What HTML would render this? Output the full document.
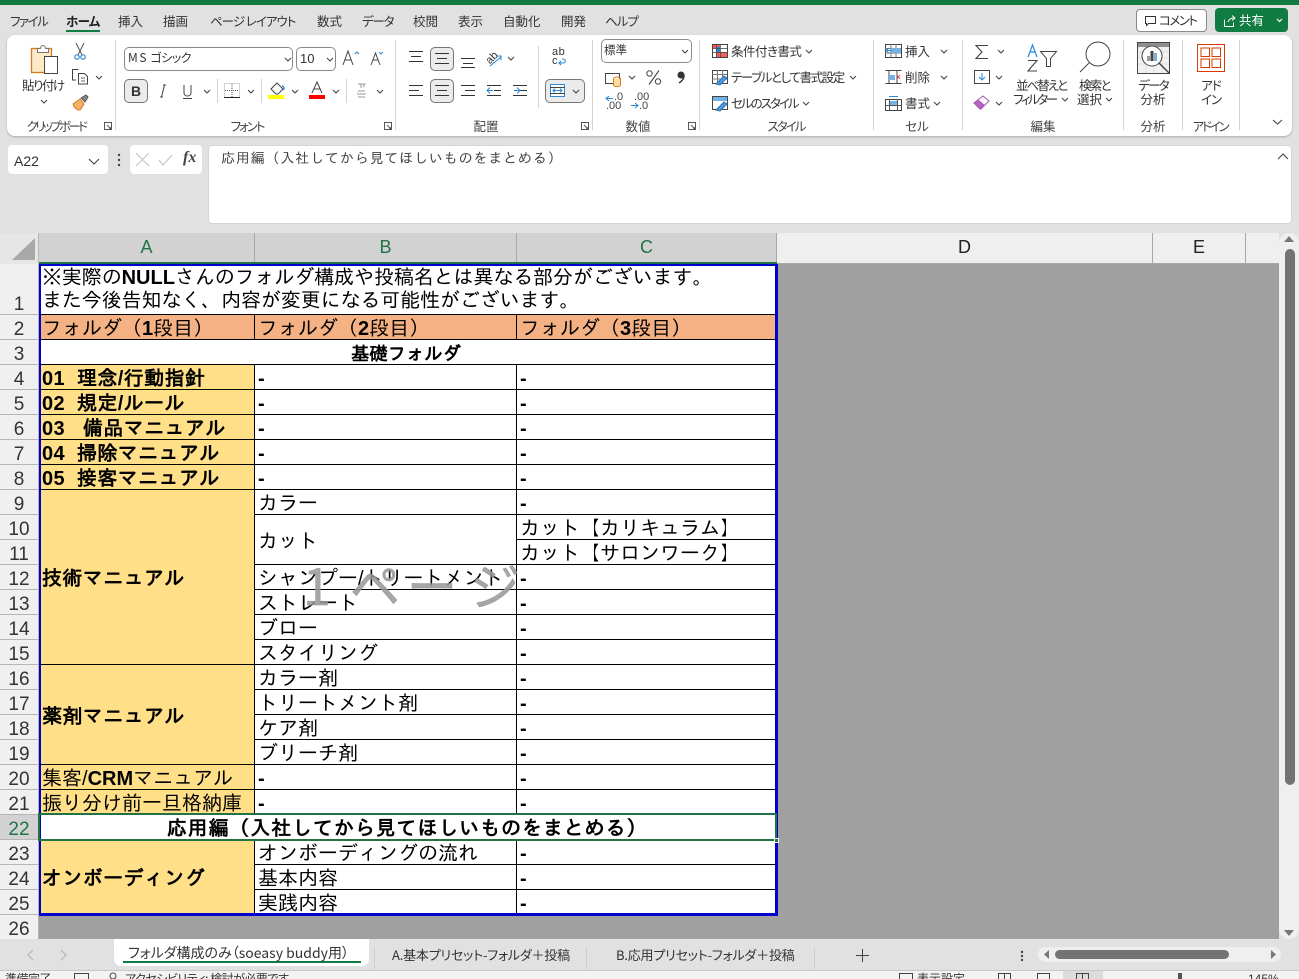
<!DOCTYPE html>
<html lang="ja"><head><meta charset="utf-8"><title>Excel</title>
<style>
*{box-sizing:border-box}
html,body{margin:0;padding:0;width:1299px;height:979px;overflow:hidden;background:#e1e1e1}
body{position:relative;font-family:"Liberation Sans","Noto Sans CJK JP",sans-serif;color:#222}
.a{position:absolute}
.t{position:absolute;white-space:nowrap;font-size:12.5px;line-height:16px;font-family:"Noto Sans CJK JP",sans-serif;font-feature-settings:"palt";color:#333}
.c{transform:translateX(-50%)}
.lb{color:#444;top:118px}
.m{top:13px;font-size:12.5px;color:#333}
table{position:absolute;left:39px;top:264px;border-collapse:separate;border-spacing:0;table-layout:fixed;width:738px;font-family:"Liberation Sans","IPAGothic",sans-serif;font-size:20px;color:#000}
td{padding:4px 0 0 3px;height:25px;border-right:1px solid #000;border-bottom:1px solid #000;line-height:20px;white-space:nowrap;overflow:hidden;background:#fff;vertical-align:middle}
td.y{background:#ffdf88;font-weight:bold;letter-spacing:.4px}
td.o{background:#f4b183}
td.h{text-align:center;font-weight:bold}
td b{font-weight:bold;font-family:"Liberation Sans",sans-serif;letter-spacing:0}
.rh{position:absolute;left:0;width:38px;text-align:center;font-size:19px;line-height:18px;color:#333;background:#f0f0f0;border-bottom:1px solid #b5b5b5;display:flex;align-items:flex-end;justify-content:center}
.ch{position:absolute;top:233px;height:30px;text-align:center;font-size:18px;line-height:29px;border-right:1px solid #a8a8a8}
</style></head><body>
<div class="a" style="left:0;top:0;width:1299px;height:5px;background:#107c41"></div>

<span class="t m" style="left:10px;letter-spacing:-1.5px">ファイル</span>
<span class="t m" style="left:66px;font-weight:700;color:#222;letter-spacing:-.7px">ホーム</span>
<div class="a" style="left:66px;top:30px;width:34px;height:2px;background:#107c41"></div>
<span class="t m" style="left:118px">挿入</span>
<span class="t m" style="left:163px">描画</span>
<span class="t m" style="left:210px;letter-spacing:-1px">ページ レイアウト</span>
<span class="t m" style="left:317px">数式</span>
<span class="t m" style="left:362px;letter-spacing:-1.2px">データ</span>
<span class="t m" style="left:413px">校閲</span>
<span class="t m" style="left:458px">表示</span>
<span class="t m" style="left:503px">自動化</span>
<span class="t m" style="left:561px">開発</span>
<span class="t m" style="left:605px;letter-spacing:-1px">ヘルプ</span>

<div class="a" style="left:1136px;top:9px;width:71px;height:23px;background:#fff;border:1px solid #8a8a8a;border-radius:4px"></div>
<span class="t" style="left:1159px;top:12px;letter-spacing:-1.5px">コメント</span>
<div class="a" style="left:1215px;top:8px;width:73px;height:24px;background:#107c41;border-radius:4px"></div>
<span class="t" style="left:1239px;top:12px;color:#fff">共有</span>

<div class="a" style="left:7px;top:35px;width:1285px;height:101px;background:#fff;border-radius:8px;box-shadow:0 1px 2px rgba(0,0,0,.25)"></div>

<div class="a" style="left:8px;top:145px;width:100px;height:29px;background:#fff;border-radius:4px"></div>
<div class="a" style="left:130px;top:145px;width:72px;height:29px;background:#fff;border-radius:4px"></div>
<div class="a" style="left:208px;top:145px;width:1084px;height:79px;background:#fff;border:1px solid #d5d5d5;border-radius:4px"></div>

<div class="a" style="left:124px;top:47px;width:169px;height:24px;border:1px solid #8a8a8a;border-radius:5px;background:#fff"></div>
<span class="t" style="left:128px;top:50px;font-size:12px;letter-spacing:-.5px">M S&nbsp; ゴシック</span>
<div class="a" style="left:296px;top:47px;width:40px;height:24px;border:1px solid #8a8a8a;border-radius:5px;background:#fff"></div>
<span class="t" style="left:300px;top:51px;font-family:'Liberation Sans';font-size:13px">10</span>
<div class="a" style="left:124px;top:79px;width:24px;height:24px;border:1px solid #777;border-radius:5px;background:#ebebeb"></div>
<span class="t" style="left:131px;top:83px;font-family:'Liberation Sans';font-weight:700;font-size:14px;color:#333">B</span>
<div class="a" style="left:430px;top:47px;width:24px;height:24px;border:1px solid #777;border-radius:5px;background:#ebebeb"></div>
<div class="a" style="left:430px;top:79px;width:24px;height:24px;border:1px solid #777;border-radius:5px;background:#ebebeb"></div>
<div class="a" style="left:545px;top:79px;width:40px;height:24px;border:1px solid #777;border-radius:5px;background:#ebebeb"></div>
<div class="a" style="left:601px;top:39px;width:91px;height:24px;border:1px solid #8a8a8a;border-radius:5px;background:#fff"></div>
<span class="t" style="left:604px;top:42px;font-size:11.5px">標準</span>

<svg class="a" style="left:0;top:0" width="1299" height="180" viewBox="0 0 1299 180" fill="none">
<g stroke="#d3d3d3" stroke-width="1"><path d="M115.500 40V130M395.500 40V130M592.500 40V130M699.500 40V130M873.500 40V130M962.500 40V130M1123.500 40V130M1182.500 40V130M1239.500 40V130M217.500 79V103M261.500 79V103M346.500 79V103M538.500 46V108"/></g>
<!-- comment / share -->
<path d="M1145.500 16.500h10v7h-7l-2 2v-2h-1z" stroke="#333"/>
<path d="M1224.500 19.500v7h9v-4M1228 22c1-3 3-4 6-4M1232 15.500l3 2.500-3 2.500" stroke="#fff"/>
<path d="M1277 19l2.500 2.500 2.500-2.500" stroke="#fff" stroke-width="1.200"/>
<!-- paste -->
<rect x="31.500" y="48.500" width="20" height="24" fill="#fbe9c8" stroke="#d9791c" stroke-width="1.300"/>
<path d="M37.500 52.500v-4h3c0-4 5-4 5 0h3v4z" fill="#fff" stroke="#777"/>
<rect x="44.500" y="56.500" width="13" height="17" fill="#fff" stroke="#444"/>
<!-- scissors -->
<path d="M76 43l6 12M84 43l-6 12" stroke="#555"/><circle cx="77" cy="57" r="2.200" stroke="#2b88d8" stroke-width="1.200"/><circle cx="83" cy="57" r="2.200" stroke="#2b88d8" stroke-width="1.200"/>
<!-- copy -->
<path d="M76 80h-3.500V69.500h6M78.500 73.500h6l3 3v7.500h-9z" stroke="#444"/><path d="M81 78h4M81 81h4" stroke="#666"/>
<!-- brush -->
<path d="M73 104l7-5 4 5-4 6c-3 0-6-2-7-6z" fill="#f4b16a" stroke="#d9791c"/><path d="M81 98l5-3 2 2-3 5z" fill="#888" stroke="#555"/>
<!-- launchers -->
<g stroke="#555"><path d="M104.500 122.500h7v7h-7zM107 125l4 4M111 127v2h-2"/><path d="M384.500 122.500h7v7h-7zM387 125l4 4M391 127v2h-2"/><path d="M581.500 122.500h7v7h-7zM584 125l4 4M588 127v2h-2"/><path d="M688.500 122.500h7v7h-7zM691 125l4 4M695 127v2h-2"/></g>
<!-- chevrons -->
<g stroke="#444" stroke-width="1.100"><path d="M41 100l3 3 3-3M96 76l3 3 3-3M285 58l3 3 3-3M327 58l3 3 3-3M204 90l3 3 3-3M248 90l3 3 3-3M292 90l3 3 3-3M333 90l3 3 3-3M377 90l3 3 3-3M508 57l3 3 3-3M573 90l3 3 3-3M682 50l3 3 3-3M629 76l3 3 3-3M806 50l3 3 3-3M850 76l3 3 3-3M803 102l3 3 3-3M941 50l3 3 3-3M941 76l3 3 3-3M934 102l3 3 3-3M998 50l3 3 3-3M996 76l3 3 3-3M996 102l3 3 3-3M1062 98l3 3 3-3M1106 98l3 3 3-3M1273 120l4.500 4 4.500-4M89 159l5 5 5-5M1278 159l5-5 5 5"/></g>
<!-- font size A -->
<path d="M343 65l5-14 5 14M345 60h6" stroke="#444"/><path d="M355 54l2-2 2 2" stroke="#2b88d8"/>
<path d="M371 65l4.500-12 4.500 12M373 60h5" stroke="#444"/><path d="M379 52l2 2 2-2" stroke="#2b88d8"/>
<!-- I U -->
<path d="M163 85h3M160 97h3M164.500 85l-3 12" stroke="#444"/>
<path d="M184 85v8c0 4 7 4 7 0v-8M183 98.500h9" stroke="#444"/>
<!-- borders -->
<path d="M224.500 83.500h15v14h-15z" stroke="#aaa" stroke-dasharray="1 1"/><path d="M224 97.500h16" stroke="#222"/><path d="M232 84v13M225 90.500h14" stroke="#555" stroke-dasharray="1 1"/>
<!-- fill -->
<path d="M271 89l6-6 6 6-5 5h-2z" stroke="#444"/><path d="M282 86c2 0 2 2 2 4" stroke="#2b88d8" stroke-width="1.300"/><rect x="268" y="95" width="16" height="4" fill="#ffff00"/>
<!-- font color -->
<path d="M312 93l5-11 5 11M314 89h6" stroke="#444"/><rect x="309" y="95" width="16" height="4" fill="#ff0000"/>
<!-- ruby -->
<path d="M358 84h7l-2 3M361 84v4M358 91h7M357 94h9M358 97h7" stroke="#999"/>
<!-- align -->
<g stroke="#333"><path d="M409 51.500h14M411 56.500h10M409 61.500h14"/><path d="M435 53.500h14M437 58.500h10M435 63.500h14"/><path d="M461 58.500h14M463 63.500h10M461 67.500h14"/><path d="M409 85.500h14M409 90.500h10M409 95.500h14"/><path d="M435 85.500h14M437 90.500h10M435 95.500h14"/><path d="M461 85.500h14M465 90.500h10M461 95.500h14"/><path d="M487 85.500h14M494 90.500h7M487 95.500h14"/><path d="M513 85.500h14M520 90.500h7M513 95.500h14"/></g>
<path d="M487 90.500h6M490 87.500l-3 3 3 3" stroke="#2b88d8"/>
<path d="M514 90.500h5M517 87.500l3 3-3 3" stroke="#2b88d8"/>
<path d="M490 66l11-9M497 56h4v4" stroke="#2b88d8" stroke-width="1.100"/>
<!-- wrap -->
<path d="M559 63h4c3 0 3-4 0-4h-1M561 61l-2 2 2 2" stroke="#2b88d8" stroke-width="1.100"/>
<!-- merge -->
<rect x="550.500" y="84.500" width="14" height="12" stroke="#2b88d8" fill="#fff"/><path d="M550 87.500h15M550 93.500h15" stroke="#444"/><path d="M553 90.500h9M555 88.500l-2 2 2 2M560 88.500l2 2-2 2" stroke="#2b88d8"/>
<!-- number -->
<rect x="605.500" y="73.500" width="14" height="10" stroke="#444"/><ellipse cx="617" cy="79" rx="3.500" ry="2" stroke="#e07b10"/><path d="M613.500 79v6c0 2 7 2 7 0v-6" fill="#fbdca8" stroke="#e07b10"/>
<circle cx="649.500" cy="73.500" r="2.700" stroke="#444"/><circle cx="658" cy="81.500" r="2.700" stroke="#444"/><path d="M659 70.500l-10 14" stroke="#444" stroke-width="1.100"/>
<circle cx="681" cy="75" r="3.500" fill="#333"/><path d="M684 75c0 4-2 6-5 8" stroke="#333" stroke-width="1.500"/>
<path d="M606 98.500h7M609 96l-3 2.500 3 2.500" stroke="#2b88d8"/><path d="M631 105.500h7M635 103l3 2.500-3 2.500" stroke="#2b88d8"/>
<!-- styles -->
<rect x="712.500" y="44.500" width="15" height="13" stroke="#444"/><rect x="713" y="45" width="7" height="3.500" fill="#ee5f5f"/><rect x="716" y="52" width="11" height="5" fill="#ee5f5f"/><path d="M716 47v5h4v-5" fill="#2b88d8"/><path d="M712 48.500h15M712 52.500h15M716.500 44v13M720.500 44v13" stroke="#444" stroke-width=".7"/>
<rect x="712.500" y="70.500" width="15" height="13" stroke="#444"/><path d="M712 74.500h15M717.500 70v13M722.500 70v13M712 79h15" stroke="#777"/><path d="M716 84l8-8 3 2-7 7z" fill="#4a9be0" stroke="#2b6ea8"/>
<rect x="712.500" y="96.500" width="15" height="13" stroke="#444"/><rect x="713" y="97" width="14" height="4" fill="#74b2e6"/><path d="M716 110l8-8 3 2-7 7z" fill="#4a9be0" stroke="#2b6ea8"/>
<!-- cells -->
<rect x="885.500" y="44.500" width="16" height="13" stroke="#444"/><path d="M885 48.500h16M885 53h16M891 44v13M896 44v13" stroke="#777"/><rect x="891" y="48" width="10" height="5" fill="#74b2e6"/><path d="M887 50.500h5M889 48l-3 2.500 3 2.500" stroke="#2b88d8"/>
<path d="M885.500 70.500h16M885.500 83.500h16M889 70v14M897 70v14" stroke="#444"/><rect x="889" y="75" width="6" height="5" fill="#74b2e6"/><path d="M897 75l3 4M900 75l-3 4" stroke="#e04b4b"/>
<rect x="885.500" y="99.500" width="16" height="11" stroke="#444"/><rect x="889" y="101" width="8" height="5" fill="#74b2e6"/><path d="M889 96.500h9" stroke="#2b88d8"/><path d="M885 105.500h16M889.500 99v11M897.500 99v11" stroke="#555"/>
<!-- sum fill eraser -->
<path d="M988 45.500h-12l6 6.500-6 6.500h12" stroke="#444" stroke-width="1.100"/>
<rect x="974.500" y="70.500" width="15" height="13" stroke="#444"/><path d="M982 73v7M979 77l3 3 3-3" stroke="#2b88d8"/>
<path d="M974 103l9-7 6 5-8 8z" fill="#fff" stroke="#a555b5"/><path d="M974 103l4-3 6 5-4 4z" fill="#b564c4" stroke="#a555b5"/>
<!-- sort -->
<path d="M1028 57l4.500-12 4.500 12M1030 52h5" stroke="#2b88d8" stroke-width="1.200"/><path d="M1028 60.500h9l-9 10.500h9" stroke="#444" stroke-width="1.100"/>
<path d="M1040.500 51.500h16l-6 7v8l-4 0v-8z" stroke="#444"/>
<!-- find -->
<circle cx="1098" cy="54" r="12" stroke="#444"/><path d="M1089 63l-9 9" stroke="#444"/>
<!-- data analysis -->
<rect x="1137.500" y="42.500" width="32" height="31" fill="#f2f2f2" stroke="#444"/><rect x="1138" y="43" width="31" height="4" fill="#8f8f8f"/><path d="M1138 52h31M1138 58h31M1138 64h31M1146 47v26M1154 47v26M1162 47v26" stroke="#ddd"/>
<circle cx="1152" cy="56" r="10" fill="#fff" stroke="#444"/><path d="M1159 63l10 10" stroke="#444" stroke-width="1.500"/><rect x="1147" y="56" width="3" height="5" fill="#999"/><rect x="1150.500" y="51" width="3" height="10" fill="#444"/><rect x="1154" y="53" width="3" height="8" fill="#74b2e6"/>
<!-- addin -->
<rect x="1197.500" y="44.500" width="27" height="27" stroke="#d83b01" stroke-width="1"/><rect x="1201" y="48" width="8.500" height="8.500" stroke="#d83b01"/><rect x="1212" y="48" width="8.500" height="8.500" stroke="#d83b01"/><rect x="1201" y="59" width="8.500" height="8.500" stroke="#d83b01"/><rect x="1212" y="59" width="8.500" height="8.500" stroke="#d83b01"/>
<!-- fx marks -->
<path d="M136 153l13 13M149 153l-13 13M159 160l4 5 9-10" stroke="#c6c6c6" stroke-width="1.200"/>
<circle cx="119" cy="155" r="1.200" fill="#444"/><circle cx="119" cy="160" r="1.200" fill="#444"/><circle cx="119" cy="165" r="1.200" fill="#444"/>
</svg>

<span class="t" style="left:486px;top:50px;font-family:'Liberation Sans';font-size:11px;transform:rotate(-45deg)">ab</span>
<span class="t" style="left:552px;top:47px;font-family:'Liberation Sans';font-size:11px;line-height:10px;letter-spacing:.5px">ab</span>
<span class="t" style="left:552px;top:56px;font-family:'Liberation Sans';font-size:11px;line-height:10px">c</span>
<span class="t" style="left:614px;top:92px;font-family:'Liberation Sans';font-size:11px;line-height:10px;color:#444">.0</span>
<span class="t" style="left:606px;top:101px;font-family:'Liberation Sans';font-size:11px;line-height:10px;color:#444">.00</span>
<span class="t" style="left:634px;top:92px;font-family:'Liberation Sans';font-size:11px;line-height:10px;color:#444">.00</span>
<span class="t" style="left:639px;top:101px;font-family:'Liberation Sans';font-size:11px;line-height:10px;color:#444">.0</span>

<span class="t" style="left:22px;top:77px;letter-spacing:-1.5px">貼り付け</span>
<span class="t" style="left:731px;top:43px;letter-spacing:-.5px">条件付き書式</span>
<span class="t" style="left:731px;top:69px;letter-spacing:-1.4px">テーブルとして書式設定</span>
<span class="t" style="left:731px;top:95px;letter-spacing:-2px">セルのスタイル</span>
<span class="t" style="left:905px;top:43px">挿入</span>
<span class="t" style="left:905px;top:69px">削除</span>
<span class="t" style="left:905px;top:95px">書式</span>
<span class="t" style="left:1016px;top:77px;letter-spacing:-2px">並べ替えと</span>
<span class="t" style="left:1013px;top:91px;letter-spacing:-2.4px">フィルター</span>
<span class="t" style="left:1079px;top:77px;letter-spacing:-1.7px">検索と</span>
<span class="t" style="left:1077px;top:91px">選択</span>
<span class="t c" style="left:1153px;top:77px;letter-spacing:-1.8px">データ</span>
<span class="t c" style="left:1153px;top:91px">分析</span>
<span class="t c" style="left:1211px;top:77px;letter-spacing:-1px">アド</span>
<span class="t c" style="left:1211px;top:91px;letter-spacing:-1px">イン</span>
<span class="t c lb" style="left:56px;letter-spacing:-2.6px">クリップボード</span>
<span class="t c lb" style="left:247px;letter-spacing:-2px">フォント</span>
<span class="t c lb" style="left:486px">配置</span>
<span class="t c lb" style="left:638px">数値</span>
<span class="t c lb" style="left:786px;letter-spacing:-2px">スタイル</span>
<span class="t c lb" style="left:917px">セル</span>
<span class="t c lb" style="left:1043px">編集</span>
<span class="t c lb" style="left:1153px">分析</span>
<span class="t c lb" style="left:1210px;letter-spacing:-2.2px">アドイン</span>

<span class="t" style="left:14px;top:153px;font-family:'Liberation Sans';font-size:14px;color:#333">A22</span>
<span class="t" style="left:183px;top:150px;font-family:'Liberation Serif';font-style:italic;font-weight:700;font-size:16px;color:#444">fx</span>
<span class="t" style="left:221px;top:150px;font-family:'IPAGothic',sans-serif;font-feature-settings:normal;font-size:14px;color:#444;letter-spacing:.85px">応用編（入社してから見てほしいものをまとめる）</span>

<div class="a" style="left:0;top:233px;width:1279px;height:31px;background:#efefef;border-bottom:1px solid #a8a8a8"></div>
<div class="a" style="left:0;top:233px;width:39px;height:31px;background:#e6e6e6;border-right:1px solid #b5b5b5"></div>
<svg class="a" style="left:0;top:233px" width="39" height="31"><path d="M35 5v22H12z" fill="#a8a8a8"/></svg>
<div class="ch" style="left:39px;width:216px;background:#d2d2d2;color:#217346">A</div>
<div class="ch" style="left:255px;width:262px;background:#d2d2d2;color:#217346">B</div>
<div class="ch" style="left:517px;width:260px;background:#d2d2d2;color:#217346">C</div>
<div class="ch" style="left:777px;width:376px;color:#222">D</div>
<div class="ch" style="left:1153px;width:93px;color:#222">E</div>

<div class="a" style="left:0;top:264px;width:39px;height:675px;background:#f0f0f0;border-right:1px solid #b5b5b5"></div>
<div class="a" style="left:39px;top:264px;width:1240px;height:675px;background:#a0a0a0"></div>

<div class="rh" style="top:264px;height:51px">1</div>
<div class="rh" style="top:315px;height:25px">2</div>
<div class="rh" style="top:340px;height:25px">3</div>
<div class="rh" style="top:365px;height:25px">4</div>
<div class="rh" style="top:390px;height:25px">5</div>
<div class="rh" style="top:415px;height:25px">6</div>
<div class="rh" style="top:440px;height:25px">7</div>
<div class="rh" style="top:465px;height:25px">8</div>
<div class="rh" style="top:490px;height:25px">9</div>
<div class="rh" style="top:515px;height:25px">10</div>
<div class="rh" style="top:540px;height:25px">11</div>
<div class="rh" style="top:565px;height:25px">12</div>
<div class="rh" style="top:590px;height:25px">13</div>
<div class="rh" style="top:615px;height:25px">14</div>
<div class="rh" style="top:640px;height:25px">15</div>
<div class="rh" style="top:665px;height:25px">16</div>
<div class="rh" style="top:690px;height:25px">17</div>
<div class="rh" style="top:715px;height:25px">18</div>
<div class="rh" style="top:740px;height:25px">19</div>
<div class="rh" style="top:765px;height:25px">20</div>
<div class="rh" style="top:790px;height:25px">21</div>
<div class="rh" style="top:815px;height:25px;background:#d2d2d2;color:#217346">22</div>
<div class="rh" style="top:840px;height:25px">23</div>
<div class="rh" style="top:865px;height:25px">24</div>
<div class="rh" style="top:890px;height:25px">25</div>
<div class="rh" style="top:915px;height:24px;border-bottom:0">26</div>

<table>
<colgroup><col style="width:216px"><col style="width:262px"><col style="width:260px"></colgroup>
<tr style="height:51px"><td colspan="3" style="height:51px;line-height:23px;padding-top:3px;vertical-align:top;letter-spacing:-.1px">※実際の<b>NULL</b>さんのフォルダ構成や投稿名とは異なる部分がございます。<br>また今後告知なく、内容が変更になる可能性がございます。</td></tr>
<tr><td class="o">フォルダ（<b>1</b>段目）</td><td class="o">フォルダ（<b>2</b>段目）</td><td class="o">フォルダ（<b>3</b>段目）</td></tr>
<tr><td colspan="3" class="h" style="font-size:18.3px;padding-right:6px">基礎フォルダ</td></tr>
<tr><td class="y">01&nbsp; 理念/行動指針</td><td><b>-</b></td><td><b>-</b></td></tr>
<tr><td class="y">02&nbsp; 規定/ルール</td><td><b>-</b></td><td><b>-</b></td></tr>
<tr><td class="y">03&nbsp;&nbsp; 備品マニュアル</td><td><b>-</b></td><td><b>-</b></td></tr>
<tr><td class="y">04&nbsp; 掃除マニュアル</td><td><b>-</b></td><td><b>-</b></td></tr>
<tr><td class="y">05&nbsp; 接客マニュアル</td><td><b>-</b></td><td><b>-</b></td></tr>
<tr><td class="y" rowspan="7">技術マニュアル</td><td>カラー</td><td><b>-</b></td></tr>
<tr><td rowspan="2">カット</td><td>カット【カリキュラム】</td></tr>
<tr><td>カット【サロンワーク】</td></tr>
<tr><td>シャンプー/トリートメント</td><td><b>-</b></td></tr>
<tr><td>ストレート</td><td><b>-</b></td></tr>
<tr><td>ブロー</td><td><b>-</b></td></tr>
<tr><td>スタイリング</td><td><b>-</b></td></tr>
<tr><td class="y" rowspan="4">薬剤マニュアル</td><td>カラー剤</td><td><b>-</b></td></tr>
<tr><td>トリートメント剤</td><td><b>-</b></td></tr>
<tr><td>ケア剤</td><td><b>-</b></td></tr>
<tr><td>ブリーチ剤</td><td><b>-</b></td></tr>
<tr><td class="y" style="font-weight:normal;letter-spacing:0">集客/<b>CRM</b>マニュアル</td><td><b>-</b></td><td><b>-</b></td></tr>
<tr><td class="y" style="font-weight:normal;letter-spacing:0">振り分け前一旦格納庫</td><td><b>-</b></td><td><b>-</b></td></tr>
<tr><td colspan="3" class="h" style="letter-spacing:.9px;padding-right:4px">応用編（入社してから見てほしいものをまとめる）</td></tr>
<tr><td class="y" rowspan="3">オンボーディング</td><td>オンボーディングの流れ</td><td><b>-</b></td></tr>
<tr><td>基本内容</td><td><b>-</b></td></tr>
<tr><td>実践内容</td><td><b>-</b></td></tr>
</table>
<div class="a" style="left:39px;top:262px;width:738px;height:2px;background:#217346"></div>
<div class="a" style="left:39px;top:264px;width:739px;height:652px;border:2px solid #0000cd;border-right-width:3px;border-bottom-width:3px;pointer-events:none"></div>
<div class="a" style="left:38px;top:813px;width:739px;height:28px;border:2px solid #217346"></div>
<div class="a" style="left:774px;top:838px;width:5px;height:5px;background:#217346;border:1px solid #fff"></div>

<span class="t" style="left:303px;top:544px;font-size:50px;line-height:80px;color:rgba(150,150,150,.85);font-feature-settings:normal;-webkit-text-stroke:.7px rgba(150,150,150,.85)">1</span>
<span class="t" style="left:350px;top:544px;font-size:50px;line-height:80px;color:rgba(150,150,150,.85);font-feature-settings:normal;-webkit-text-stroke:.7px rgba(150,150,150,.85)">ペ</span>
<span class="t" style="left:407px;top:544px;font-size:50px;line-height:80px;color:rgba(150,150,150,.85);font-feature-settings:normal;-webkit-text-stroke:.7px rgba(150,150,150,.85)">ー</span>
<span class="t" style="left:470px;top:544px;font-size:50px;line-height:80px;color:rgba(150,150,150,.85);font-feature-settings:normal;-webkit-text-stroke:.7px rgba(150,150,150,.85)">ジ</span>

<div class="a" style="left:1279px;top:233px;width:20px;height:706px;background:#efefef;border-radius:10px"></div>
<svg class="a" style="left:1279px;top:233px" width="20" height="706"><path d="M10 3l5 6H5z" fill="#777"/><path d="M5 697h10l-5 6z" fill="#777"/></svg>
<div class="a" style="left:1285px;top:249px;width:10px;height:536px;background:#737373;border-radius:5px"></div>

<div class="a" style="left:114px;top:939px;width:255px;height:27px;background:#fff;border-radius:0 0 7px 7px"></div>
<div class="a" style="left:123px;top:961px;width:238px;height:2px;background:#107c41"></div>
<svg class="a" style="left:0;top:939px" width="1299" height="32" fill="none"><path d="M33 11l-5 5 5 5M61 11l5 5-5 5" stroke="#b5b5b5" stroke-width="1.200"/><path d="M374.500 8v22M586.500 8v22M814.500 8v22" stroke="#cfcfcf"/><path d="M862.500 10v13M856 16.500h13" stroke="#444"/><circle cx="1022" cy="13" r="1.200" fill="#444"/><circle cx="1022" cy="17" r="1.200" fill="#444"/><circle cx="1022" cy="21" r="1.200" fill="#444"/></svg>
<span class="t" style="left:128px;top:945px;font-size:14px;color:#333">フォルダ構成のみ（soeasy buddy用）</span>
<span class="t" style="left:392px;top:947px;font-size:13px;color:#333;letter-spacing:-.2px">A.基本プリセット-フォルダ＋投稿</span>
<span class="t" style="left:616px;top:947px;font-size:13px;color:#333;letter-spacing:-.2px">B.応用プリセット-フォルダ＋投稿</span>
<div class="a" style="left:1038px;top:947px;width:243px;height:15px;background:#efefef;border-radius:8px"></div>
<div class="a" style="left:1055px;top:950px;width:174px;height:9px;background:#737373;border-radius:5px"></div>
<svg class="a" style="left:1038px;top:947px" width="243" height="15"><path d="M11 3v9l-5-4.500zM233 3v9l5-4.500z" fill="#777"/></svg>

<div class="a" style="left:0;top:970px;width:1299px;height:9px;background:#f3f3f3;border-top:1px solid #c8c8c8;overflow:hidden">
<span class="t" style="left:5px;top:0;font-size:12px;letter-spacing:-.5px">準備完了</span>
<span class="t" style="left:125px;top:0;font-size:12px;letter-spacing:-.5px">アクセシビリティ: 検討が必要です</span>
<span class="t" style="left:917px;top:0;font-size:12px">表示設定</span>
<div class="a" style="left:1063px;top:0;width:40px;height:9px;background:#dcdcdc"></div>
<svg class="a" style="left:0;top:0" width="1299" height="9" fill="none"><path d="M74.500 2.500h14v8h-14zM899.500 2.500h13v8h-13zM998.500 2.500h12v8h-12zM1004.500 2v7M1037.500 2.500h12v8h-12zM1076.500 2.500h12v8h-12zM1082.500 2v7" stroke="#444"/><circle cx="113" cy="5" r="3" stroke="#444"/><rect x="1178" y="2" width="4" height="7" fill="#555"/></svg>
<span class="t" style="left:1248px;top:0;font-size:12px;font-family:'Liberation Sans'">145%</span>
</div>
</body></html>
